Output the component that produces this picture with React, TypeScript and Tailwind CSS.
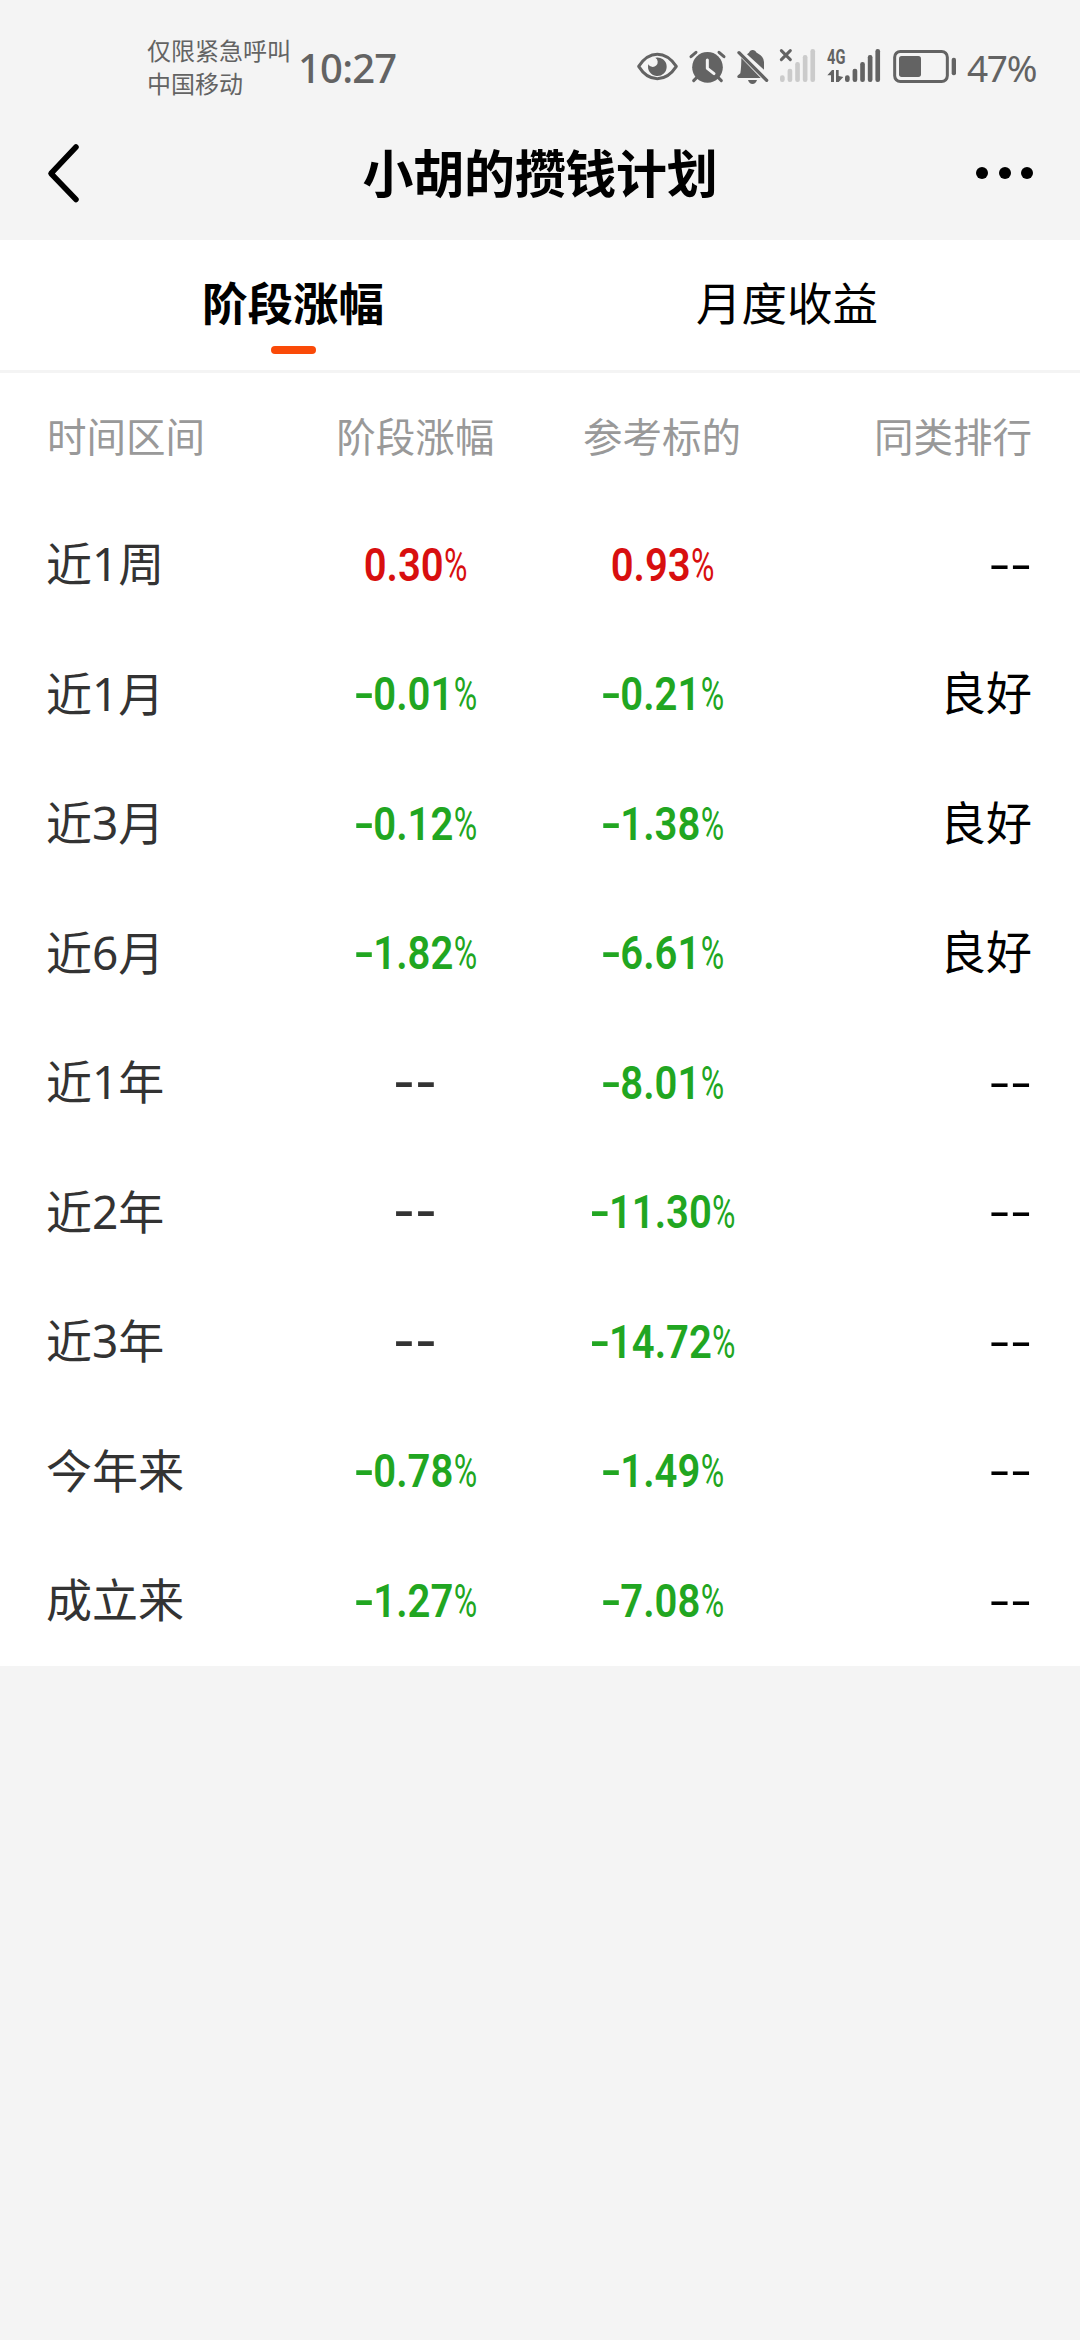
import React from "react";

type Row = { label: string; gain: string; ref: string; rank: string };

const rows: Row[] = [
  { label: "近1周", gain: "0.30", ref: "0.93", rank: "--" },
  { label: "近1月", gain: "-0.01", ref: "-0.21", rank: "良好" },
  { label: "近3月", gain: "-0.12", ref: "-1.38", rank: "良好" },
  { label: "近6月", gain: "-1.82", ref: "-6.61", rank: "良好" },
  { label: "近1年", gain: "--", ref: "-8.01", rank: "--" },
  { label: "近2年", gain: "--", ref: "-11.30", rank: "--" },
  { label: "近3年", gain: "--", ref: "-14.72", rank: "--" },
  { label: "今年来", gain: "-0.78", ref: "-1.49", rank: "--" },
  { label: "成立来", gain: "-1.27", ref: "-7.08", rank: "--" },
];

function Percent({ value }: { value: string }) {
  if (value === "--") {
    return (
      <span className="inline-flex font-['Roboto'] text-[46px] leading-none font-semibold text-[#333]">
        <span className="scale-x-[1.28] tracking-[0.5px]">--</span>
      </span>
    );
  }
  const negative = value.startsWith("-");
  return (
    <span
      className={
        "inline-flex scale-x-[0.87] font-['Roboto'] text-[46px] leading-none font-semibold " +
        (negative ? "text-[#21a621]" : "text-[#d80f0f]")
      }
    >
      {negative && (
        <span className="inline-flex w-[22px] justify-center">
          <span className="scale-x-[1.45]">-</span>
        </span>
      )}
      <span>{negative ? value.slice(1) : value}</span>
      <span className="inline-flex w-[27px] justify-center font-normal">
        <span className="scale-x-[0.8]">%</span>
      </span>
    </span>
  );
}

function Bars({ x, color }: { x: number; color: string }) {
  const tops = [136, 116, 96, 75, 57];
  return (
    <g fill={color}>
      {tops.map((t, i) => (
        <rect key={t} x={x + i * 22.8} y={t} width="14" height={156 - t} rx="6.5" />
      ))}
    </g>
  );
}

function StatusIcons() {
  const c = "#636363";
  return (
    <div className="flex h-[75px]">
      <svg className="h-[75px] w-[50px]" viewBox="48 0 150 225">
        <path d="M56 109Q80 73 112 73T169 109Q145 146 112 146T56 109Z" fill="none" stroke={c} strokeWidth="9" strokeLinejoin="round" />
        <path d="M106 83A28 28 0 1 1 85 103A15 15 0 1 0 106 83Z" fill={c} />
      </svg>
      <svg className="h-[75px] w-[46px]" viewBox="198 0 138 225">
        <circle cx="262.500" cy="112" r="46" fill={c} />
        <path d="M213 80L228 67M312 80L297 67M230 143L221 152M295 143L304 152" stroke={c} strokeWidth="9" strokeLinecap="round" />
        <path d="M262 90V115L282 131" fill="none" stroke="#f4f4f4" strokeWidth="9" strokeLinecap="round" strokeLinejoin="round" />
      </svg>
      <svg className="h-[75px] w-[42px]" viewBox="336 0 126 225">
        <path d="M364 84L422 144H355Q349 141 354 136L361 130Q364 112 364 84Z" fill={c} />
        <path d="M381 73Q388 68 390 63Q398 57 406 63Q408 68 415 71Q430 78 432 96V119Z" fill={c} />
        <path d="M384 150H411Q407 162 397.500 162T384 150Z" fill={c} />
        <path d="M357 68L440 151" stroke={c} strokeWidth="10" strokeLinecap="round" />
      </svg>
      <svg className="h-[75px] w-[48px]" viewBox="462 0 144 225">
        <path d="M484 62L511 89M511 62L484 89" stroke={c} strokeWidth="9" strokeLinecap="round" />
        <Bars x={480} color="#cbcbcb" />
      </svg>
      <svg className="h-[75px] w-[68px]" viewBox="606 0 204 225">
        <text x="621" y="101" textLength="55" lengthAdjust="spacingAndGlyphs" fill={c} className="font-['Roboto'] text-[60px] font-bold">4G</text>
        <path d="M622 136L636 120H642V156H633V136ZM648 120H656V138L670 141L656 156H648Z" fill={c} />
        <Bars x={675} color={c} />
      </svg>
      <svg className="h-[75px] w-[70px]" viewBox="810 0 210 225">
        <rect x="824" y="64.500" width="158" height="90" rx="17" fill="none" stroke={c} strokeWidth="9" />
        <rect x="837" y="78" width="66" height="63" rx="8" fill={c} />
        <rect x="995" y="83" width="13" height="53" rx="6" fill={c} />
      </svg>
    </div>
  );
}

function StatusBar() {
  return (
    <div className="flex h-[105px] pt-[30px] pl-[147px] text-[#636363]">
      <div className="w-[151px] pt-[3px] text-[24px] leading-[33px] whitespace-nowrap">
        <div>仅限紧急呼叫</div>
        <div>中国移动</div>
      </div>
      <div className="w-[338px] pt-[8px] font-['Noto_Sans'] text-[40px] leading-[60px] font-medium tracking-[-0.8px]">10:27</div>
      <StatusIcons />
      <div className="pt-[8px] pl-[7px] font-['Noto_Sans'] text-[37px] leading-[60px] tracking-[-1.3px]">47%</div>
    </div>
  );
}

function NavBar() {
  return (
    <div className="flex h-[135px] items-center justify-between pr-[47px] pl-[47px]">
      <svg className="h-[64px] w-[70px]" viewBox="0 0 70 64" fill="none" stroke="#000" strokeWidth="5.500" strokeLinecap="round" strokeLinejoin="round">
        <path d="M29 6L4 32.500L29 58.500" />
      </svg>
      <h1 className="pb-[2px] text-[51px] leading-none font-bold tracking-[-0.3px] text-black">小胡的攒钱计划</h1>
      <div className="flex w-[70px] justify-end gap-[10.500px]">
        <i className="size-[12px] rounded-full bg-black" />
        <i className="size-[12px] rounded-full bg-black" />
        <i className="size-[12px] rounded-full bg-black" />
      </div>
    </div>
  );
}

export default function App() {
  return (
    <div className="h-[2340px] w-[1080px] overflow-hidden bg-[#f4f4f4] font-['Noto_Sans_CJK_SC',sans-serif]">
      <StatusBar />
      <NavBar />
      <div className="bg-white">
        <div className="grid h-[133px] grid-cols-2 border-b-[3px] border-[#f4f4f4] px-[46px] text-[45.500px] leading-[64px] text-black">
          <div className="flex flex-col items-center pt-[29px]">
            <span className="font-bold">阶段涨幅</span>
            <span className="mt-[13px] h-[8px] w-[45px] rounded-full bg-[#fa4a08]" />
          </div>
          <div className="flex flex-col items-center pt-[29px]">
            <span>月度收益</span>
          </div>
        </div>
        <div className="pr-[48px] pl-[45px]">
          <div className="grid h-[127.500px] grid-cols-4 items-center pb-[5px] text-[39.500px] leading-none text-[#999]">
            <div className="pl-[2px]">时间区间</div>
            <div className="text-center">阶段涨幅</div>
            <div className="text-center">参考标的</div>
            <div className="text-right">同类排行</div>
          </div>
          {rows.map((r) => (
            <div key={r.label} className="grid h-[129.500px] grid-cols-4 items-center text-[46px] leading-none">
              <div className="pb-[4px] pl-px font-['Noto_Sans','Noto_Sans_CJK_SC',sans-serif] text-[#333]">{r.label}</div>
              <div className="flex justify-center pb-px pl-px">
                <Percent value={r.gain} />
              </div>
              <div className="flex justify-center pb-px pl-px">
                <Percent value={r.ref} />
              </div>
              <div className="flex justify-end pb-[9px] text-black">
                {r.rank === "--" ? (
                  <span className="origin-right scale-x-[1.45] font-['Noto_Sans']">--</span>
                ) : (
                  <span>{r.rank}</span>
                )}
              </div>
            </div>
          ))}
        </div>
      </div>
    </div>
  );
}
